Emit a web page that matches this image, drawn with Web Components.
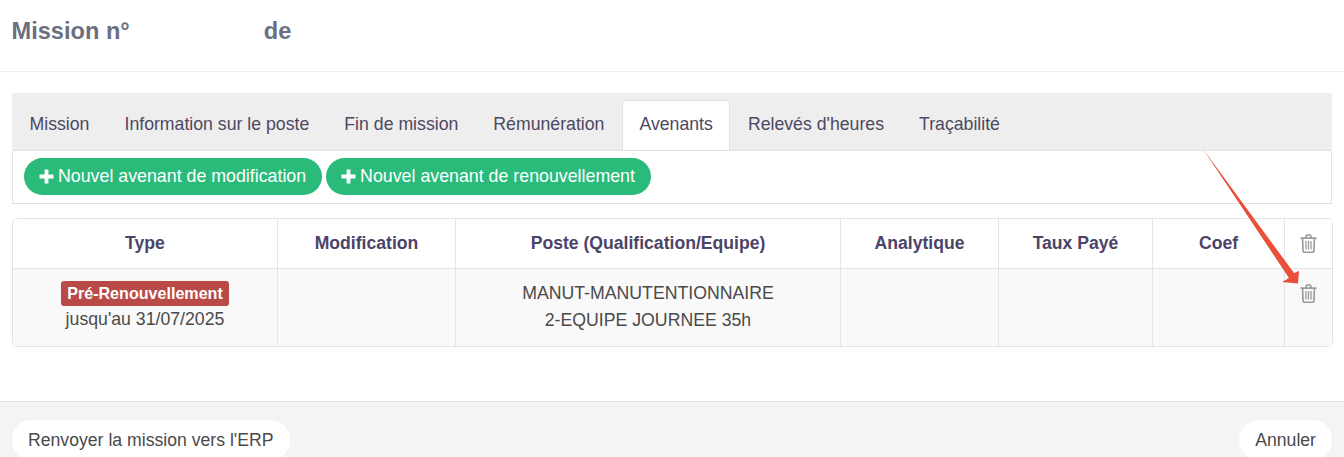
<!DOCTYPE html>
<html lang="fr">
<head>
<meta charset="utf-8">
<title>Mission</title>
<style>
  html, body { margin: 0; padding: 0; background: #fff; }
  body { width: 1344px; height: 457px; overflow: hidden; position: relative; font-family: "Liberation Sans", Arial, sans-serif; }
</style>
</head>
<body>
<mission-header></mission-header>
<mission-tabs active="Avenants" tabs="Mission|Information sur le poste|Fin de mission|Rémunération|Avenants|Relevés d'heures|Traçabilité">
  <action-button>Nouvel avenant de modification</action-button>
  <action-button>Nouvel avenant de renouvellement</action-button>
</mission-tabs>
<avenants-table></avenants-table>
<mission-footer></mission-footer>
<red-arrow></red-arrow>

<script>
const TRASH = `<svg width="17" height="19" viewBox="0 0 17 19" fill="none" stroke="#9c9c9c" stroke-width="1.7">
  <path d="M.5 4.2h16M2.6 4.2l.4 12.4c0 1 .7 1.7 1.6 1.7h7.8c.9 0 1.6-.7 1.6-1.7l.4-12.4M5.6 4l.9-2.4c.1-.4.4-.6.8-.6h2.4c.4 0 .7.2.8.6l.9 2.4"/>
  <path d="M6 7v8.5M8.5 7v8.5M11 7v8.5" stroke-width="1.3"/>
</svg>`;

class MissionHeader extends HTMLElement {
  constructor() {
    super();
    this.attachShadow({ mode: 'open' });
    this.shadowRoot.innerHTML = `
      <style>
        :host { display: flex; align-items: center; height: 71px; padding: 0 12px; border-bottom: 1px solid #eeeeee; }
        h1 { margin: 0 0 9px -0.5px; font-size: 23.6px; font-weight: 700; color: #6b7080; display: flex; gap: 134px; }
      </style>
      <h1><span>Mission n°</span><span>de</span></h1>`;
  }
}

class ActionButton extends HTMLElement {
  constructor() {
    super();
    this.attachShadow({ mode: 'open' });
    this.shadowRoot.innerHTML = `
      <style>
        :host { display: inline-flex; align-items: center; height: 37px; padding: 0 16px 0 15px; gap: 4px; border-radius: 19px; background: #2abb7b; color: #fff; font-size: 17.8px; white-space: nowrap; }
        svg { display: block; }
      </style>
      <svg width="15" height="15" viewBox="0 0 15 15"><path fill="#fff" d="M5.6 .5h3.8v5.1h5.1v3.8H9.4v5.1H5.6V9.4H.5V5.6h5.1z"/></svg>
      <span><slot></slot></span>`;
  }
}

class MissionTabs extends HTMLElement {
  constructor() {
    super();
    this.attachShadow({ mode: 'open' });
    const active = this.getAttribute('active');
    const tabs = this.getAttribute('tabs').split('|').map(t =>
      `<div class="tab ${t === active ? 'active' : ''}">${t}</div>`
    ).join('');
    this.shadowRoot.innerHTML = `
      <style>
        :host { display: block; margin: 21px 12px 0; }
        .bar { display: flex; height: 57px; box-sizing: border-box; padding-top: 7px; background: #eeeeee; }
        .tab { display: flex; align-items: center; padding: 0 17.5px 1px; font-size: 17.7px; color: #4d4862; white-space: nowrap; }
        .tab.active { background: #fff; box-shadow: inset 1px 0 #e2e2e2, inset -1px 0 #e2e2e2, inset 0 1px #e2e2e2; border-radius: 2px 2px 0 0; }
        .body { display: flex; gap: 4px; height: 54px; box-sizing: border-box; padding: 7px 11px; background: #fff; border: 1px solid #e2e2e2; }
      </style>
      <div class="bar">${tabs}</div>
      <div class="body"><slot></slot></div>`;
  }
}

class AvenantsTable extends HTMLElement {
  constructor() {
    super();
    this.attachShadow({ mode: 'open' });
    this.shadowRoot.innerHTML = `
      <style>
        :host { display: block; margin: 14px 11px 0 12px; }
        .wrap { display: grid; grid-template-columns: 265px 178px 385px 158px 154px 132px 47px; grid-template-rows: 50px 78px; border: 1px solid #e4e4e4; border-radius: 5px; overflow: hidden; box-sizing: border-box; height: 129px; width: 1321px; }
        .c { display: flex; flex-direction: column; align-items: center; justify-content: center; text-align: center; border-right: 1px solid #e4e4e4; box-sizing: border-box; }
        .c:nth-child(7n) { border-right: 0; padding-right: 1px; }
        .h { font-size: 17.6px; font-weight: 700; color: #4b4468; border-bottom: 1px solid #e4e4e4; background: #fff; }
        .d { font-size: 17.7px; color: #4a4a4a; background: #f9f9f9; line-height: 27px; padding-bottom: 2px; }
        .d.ico { justify-content: flex-start; padding-top: 15px; padding-bottom: 0; }
        .badge { display: inline-block; background: #b94a48; color: #fff; font-weight: 700; font-size: 16.1px; line-height: 25px; height: 25px; padding: 0 6px; border-radius: 3px; }
      </style>
      <div class="wrap">
        <div class="c h">Type</div>
        <div class="c h">Modification</div>
        <div class="c h">Poste (Qualification/Equipe)</div>
        <div class="c h">Analytique</div>
        <div class="c h">Taux Payé</div>
        <div class="c h">Coef</div>
        <div class="c h">${TRASH}</div>
        <div class="c d"><span class="badge">Pré-Renouvellement</span><span>jusqu'au 31/07/2025</span></div>
        <div class="c d"></div>
        <div class="c d"><span>MANUT-MANUTENTIONNAIRE</span><span>2-EQUIPE JOURNEE 35h</span></div>
        <div class="c d"></div>
        <div class="c d"></div>
        <div class="c d"></div>
        <div class="c d ico">${TRASH}</div>
      </div>`;
  }
}

class MissionFooter extends HTMLElement {
  constructor() {
    super();
    this.attachShadow({ mode: 'open' });
    this.shadowRoot.innerHTML = `
      <style>
        :host { display: flex; justify-content: space-between; align-items: flex-start; margin-top: 54px; height: 57px; box-sizing: border-box; padding: 18px 12px 0; background: #f4f4f4; border-top: 1px solid #e2e2e2; }
        .b { display: flex; align-items: center; height: 40px; padding: 0 16px; background: #fff; border-radius: 20px; font-size: 17.65px; color: #4a4a4a; white-space: nowrap; }
      </style>
      <div class="b">Renvoyer la mission vers l'ERP</div>
      <div class="b">Annuler</div>`;
  }
}

// fleche rouge posee par dessus le tableau
class RedArrow extends HTMLElement {
  constructor() {
    super();
    this.attachShadow({ mode: 'open' });
    this.shadowRoot.innerHTML = `
      <style>
        :host { display: block; position: absolute; left: 1190px; top: 140px; width: 120px; height: 160px; pointer-events: none; }
      </style>
      <svg width="120" height="160" viewBox="0 0 120 160">
        <path fill="#e8503a" d="M13 9 L104 133 L109 131 L108 143.5 L92 142 L99 138 Z"/>
      </svg>`;
  }
}

customElements.define('mission-header', MissionHeader);
customElements.define('action-button', ActionButton);
customElements.define('mission-tabs', MissionTabs);
customElements.define('avenants-table', AvenantsTable);
customElements.define('mission-footer', MissionFooter);
customElements.define('red-arrow', RedArrow);
</script>
</body>
</html>
